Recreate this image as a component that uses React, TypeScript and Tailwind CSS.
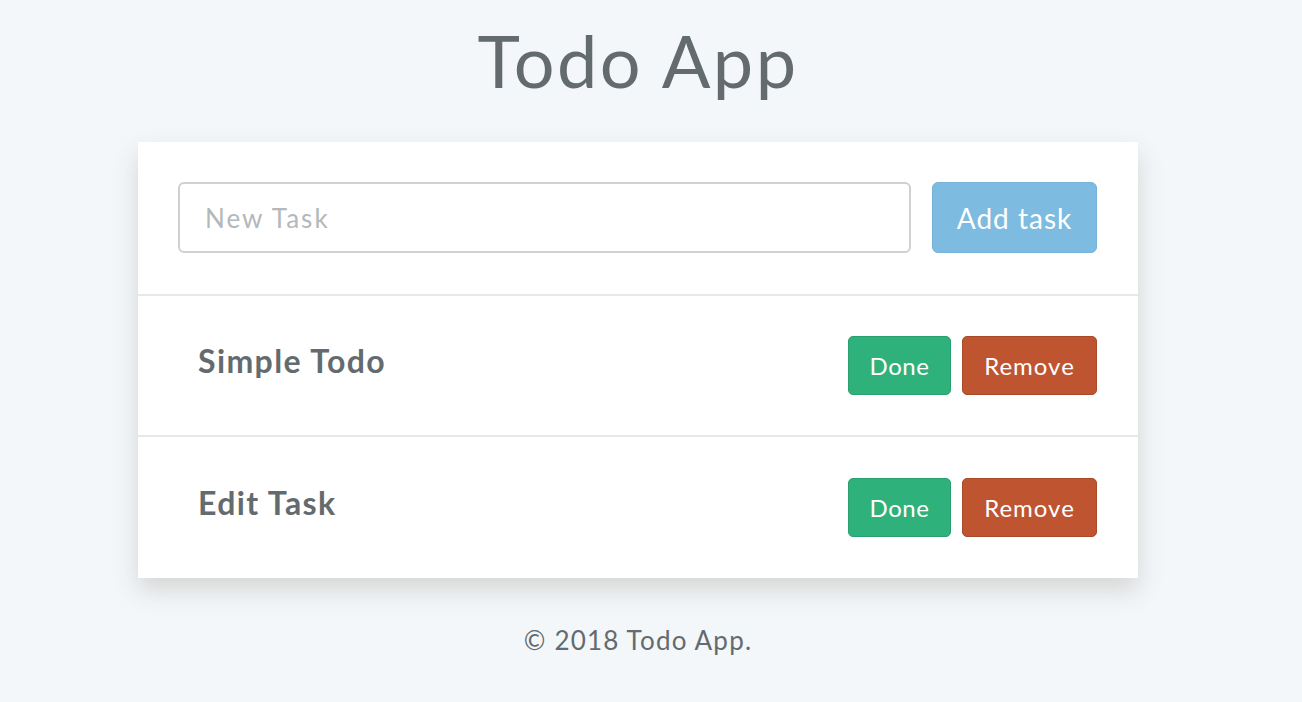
import React from "react";

const font = { fontFamily: "Lato, 'Noto Sans', sans-serif" };

function TaskRow({ title, last }: { title: string; last?: boolean }) {
  return (
    <div
      className={`flex items-center justify-between pl-[60px] pr-[41px] h-[141px] ${
        last ? "" : "border-b-2 border-[#e6e9ec]"
      }`}
    >
      <span className="text-[32px] font-bold tracking-[1.4px] text-[#636b6f] -mt-[10px]">{title}</span>
      <div className="flex gap-[11px]">
        <button className="h-[59px] w-[103px] rounded-[5px] bg-[#2fb17c] border border-[#29a06f] text-white text-[24px] tracking-[0.5px]">
          Done
        </button>
        <button className="h-[59px] w-[135px] rounded-[5px] bg-[#bf5430] border border-[#aa4a29] text-white text-[24px] tracking-[1px]">
          Remove
        </button>
      </div>
    </div>
  );
}

export default function App() {
  return (
    <div className="min-h-screen bg-[#f4f7fa] flex flex-col items-center pr-[26px]" style={font}>
      <h1 className="text-[72px] leading-none font-normal tracking-[2.5px] text-[#636b6f] mt-[24px]">Todo App</h1>
      <div className="w-[1000px] mt-[46px] bg-white shadow-[0_12px_24px_rgba(60,52,30,0.17)]">
        <div className="flex gap-[21px] pl-10 pr-[41px] pt-10 pb-[41px] border-b-2 border-[#e6e9ec]">
          <input
            className="flex-1 h-[71px] border-2 border-[#cdd1d4] rounded-[6px] pl-[25px] text-[26px] tracking-[2px] text-[#636b6f] placeholder-[#b3b8bb] outline-none"
            placeholder="New Task"
          />
          <button className="w-[165px] h-[71px] rounded-[6px] bg-[#7ebbe0] border border-[#75b3d8] text-white text-[28px] tracking-[1px]">
            Add task
          </button>
        </div>
        <TaskRow title="Simple Todo" />
        <TaskRow title="Edit Task" last />
      </div>
      <footer className="mt-[43px] text-[26px] tracking-[1.2px] text-[#636b6f]">© 2018 Todo App.</footer>
    </div>
  );
}
